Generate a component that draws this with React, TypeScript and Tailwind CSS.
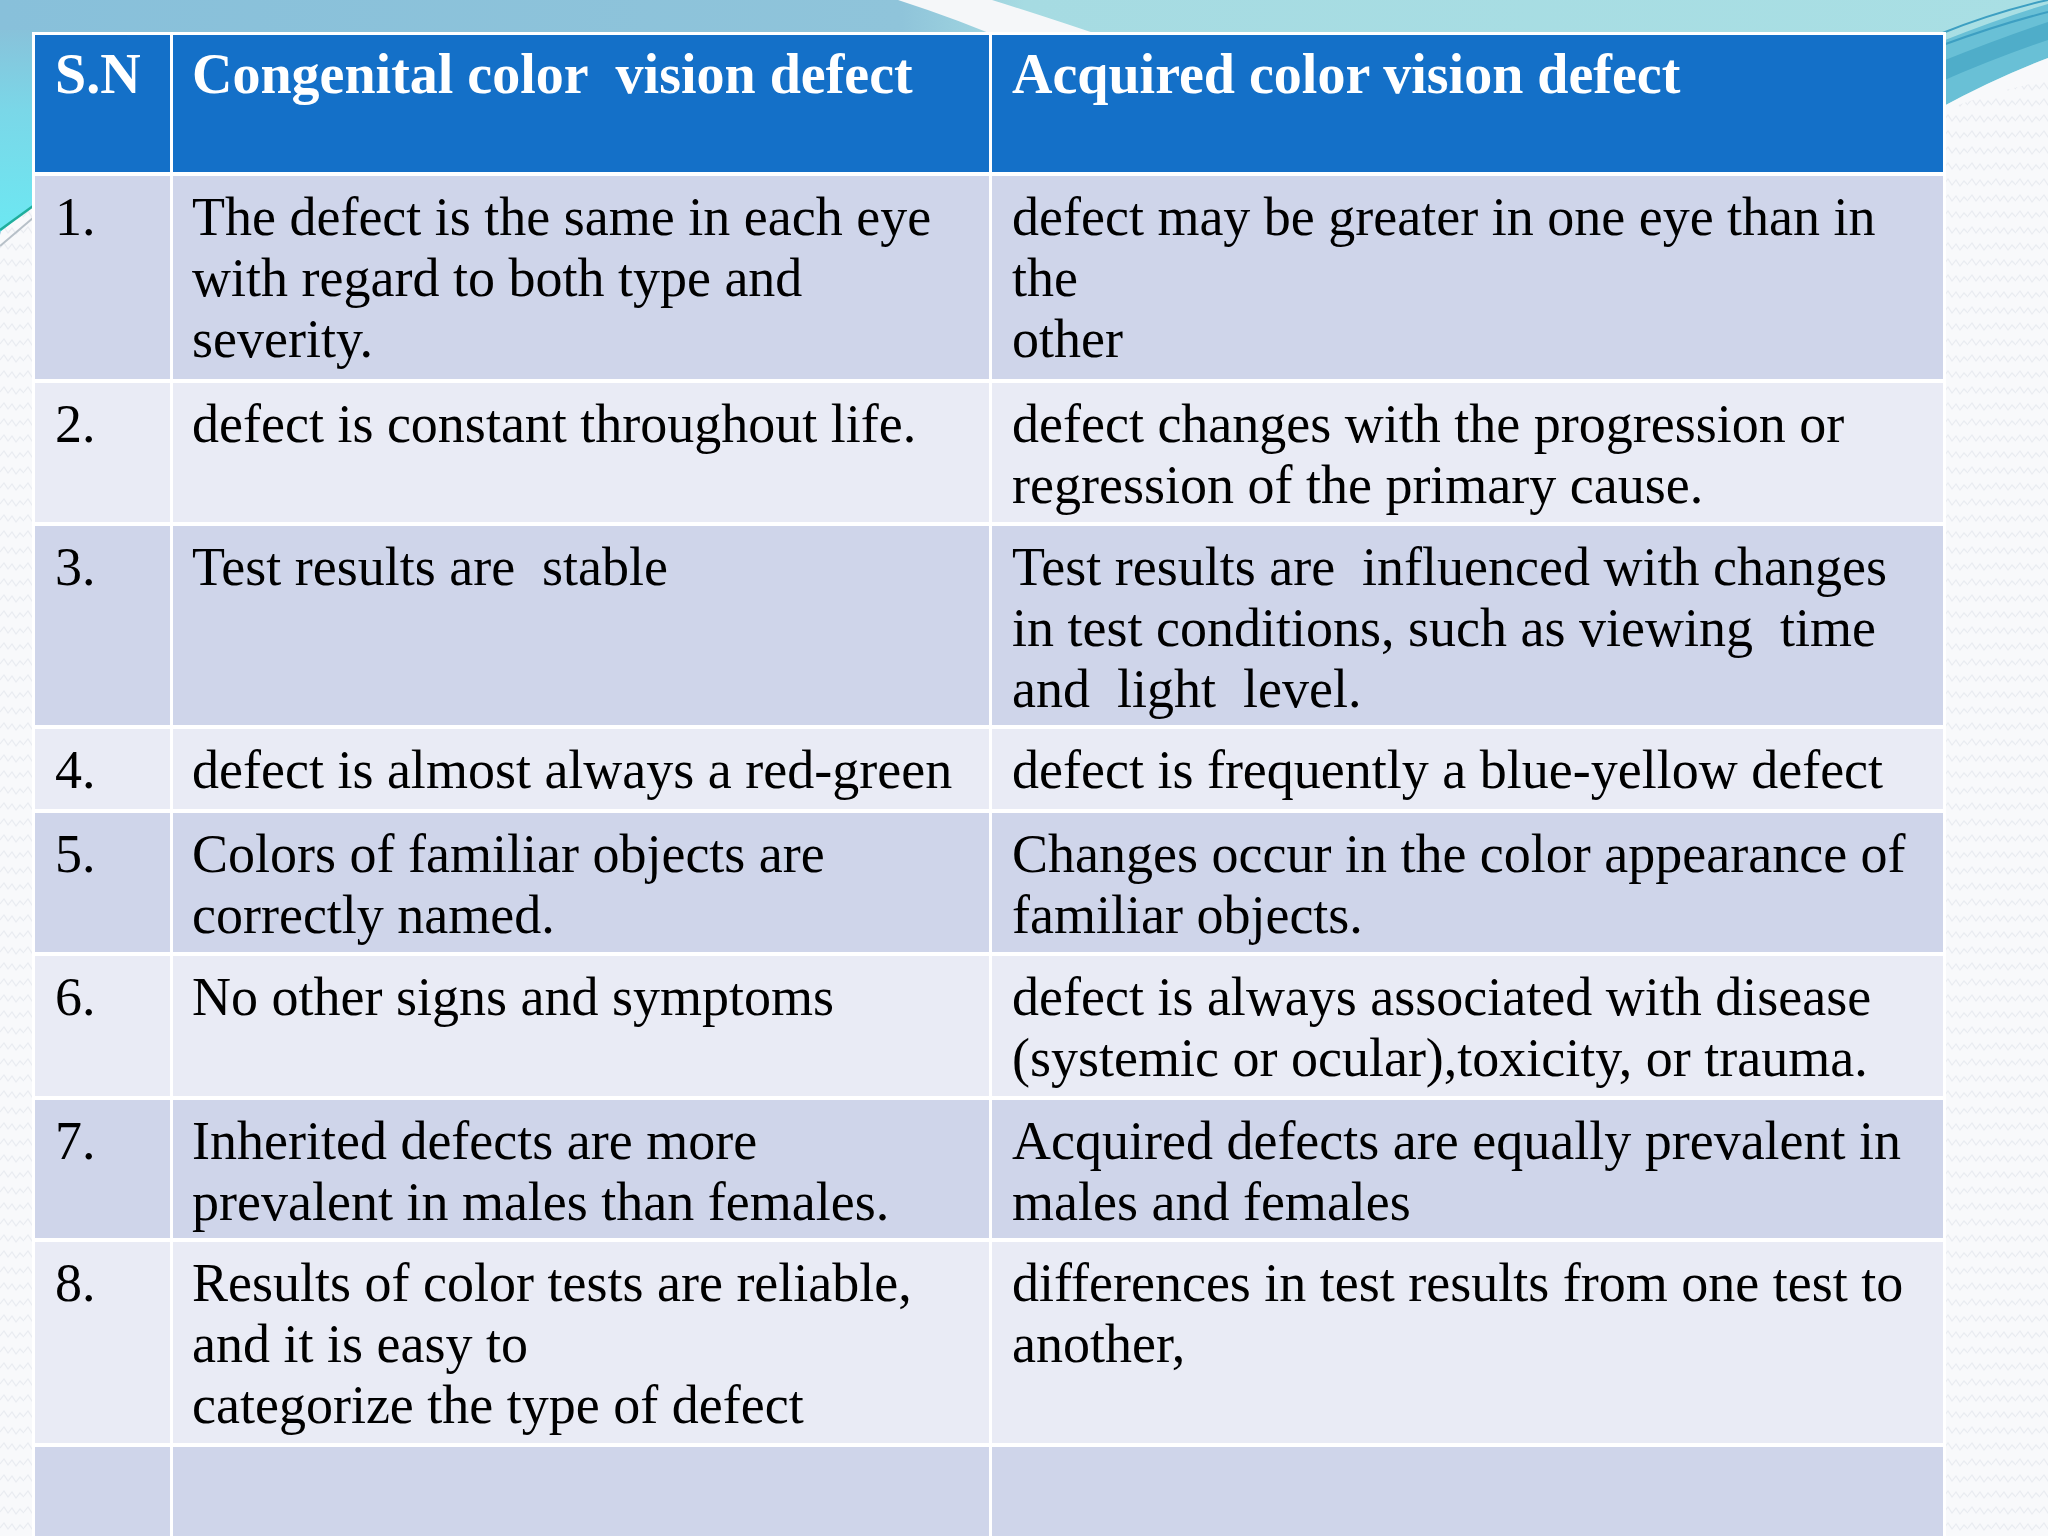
import React from "react";

type Row = { n: string; a: string[]; b: string[]; h: string; bg: string };

const rows: Row[] = [
  {
    n: "1.",
    a: ["The defect is the same in each eye", "with regard to both type and", "severity."],
    b: ["defect may be greater in one eye than in", "the", "other"],
    h: "h-[203px]",
    bg: "bg-[#cfd5ea]",
  },
  {
    n: "2.",
    a: ["defect is constant throughout life."],
    b: ["defect changes with the progression or", "regression of the primary cause."],
    h: "h-[139px]",
    bg: "bg-[#e9ebf5]",
  },
  {
    n: "3.",
    a: ["Test results are  stable"],
    b: ["Test results are  influenced with changes", "in test conditions, such as viewing  time", "and  light  level."],
    h: "h-[199px]",
    bg: "bg-[#cfd5ea]",
  },
  {
    n: "4.",
    a: ["defect is almost always a red-green"],
    b: ["defect is frequently a blue-yellow defect"],
    h: "h-[80px]",
    bg: "bg-[#e9ebf5]",
  },
  {
    n: "5.",
    a: ["Colors of familiar objects are", "correctly named."],
    b: ["Changes occur in the color appearance of", "familiar objects."],
    h: "h-[139px]",
    bg: "bg-[#cfd5ea]",
  },
  {
    n: "6.",
    a: ["No other signs and symptoms"],
    b: ["defect is always associated with disease", "(systemic or ocular),toxicity, or trauma."],
    h: "h-[140px]",
    bg: "bg-[#e9ebf5]",
  },
  {
    n: "7.",
    a: ["Inherited defects are more", "prevalent in males than females."],
    b: ["Acquired defects are equally prevalent in", "males and females"],
    h: "h-[138px]",
    bg: "bg-[#cfd5ea]",
  },
  {
    n: "8.",
    a: ["Results of color tests are reliable,", "and it is easy to", "categorize the type of defect"],
    b: ["differences in test results from one test to", "another,"],
    h: "h-[201px]",
    bg: "bg-[#e9ebf5]",
  },
  {
    n: "",
    a: [],
    b: [],
    h: "h-[140px]",
    bg: "bg-[#cfd5ea]",
  },
];

function Lines({ lines }: { lines: string[] }) {
  return (
    <div className="flex flex-col">
      {lines.map((l, i) => (
        <span key={i} className="whitespace-pre leading-[61px]">
          {l}
        </span>
      ))}
    </div>
  );
}

function Background() {
  return (
    <svg
      className="absolute inset-0 h-full w-full"
      viewBox="0 0 2048 1536"
      preserveAspectRatio="none"
    >
      <defs>
        <pattern id="tex" width="24" height="16" patternUnits="userSpaceOnUse">
          <rect width="24" height="16" fill="#f8f9fb" />
          <path d="M0 8 L4 3 L8 9 L12 4 L16 10 L20 5 L24 9" fill="none" stroke="#e9ecf1" strokeWidth="1.2" />
        </pattern>
        <linearGradient id="band" x1="0" y1="0" x2="1" y2="0">
          <stop offset="0" stopColor="#88c0da" />
          <stop offset="0.44" stopColor="#8fc4da" />
          <stop offset="0.5" stopColor="#a6dbe2" />
          <stop offset="1" stopColor="#a9dfe4" />
        </linearGradient>
        <linearGradient id="leftc" x1="0" y1="0" x2="0" y2="1">
          <stop offset="0" stopColor="#88c2da" />
          <stop offset="0.4" stopColor="#7ad7e8" />
          <stop offset="1" stopColor="#6ce8f2" />
        </linearGradient>
      </defs>
      <rect width="2048" height="1536" fill="url(#tex)" />
      <path d="M0 0 H2048 V60 Q2000 85 1940 108 L60 108 Q20 150 0 235 Z" fill="url(#band)" />
      <path d="M0 30 L40 30 L40 200 L0 232 Z" fill="url(#leftc)" />
      <path d="M0 230 L40 201" stroke="#1fae9c" strokeWidth="2.5" />
      <path d="M0 246 L40 212" stroke="#b7c0c8" strokeWidth="2" />
      <path d="M898 0 L992 0 Q1050 18 1120 42 L1010 42 Q960 20 898 0 Z" fill="#f5f7f9" />
      <path d="M1940 42 Q2000 18 2048 4 V58 Q1995 78 1940 108 Z" fill="#69c0d6" />
      <path d="M1940 62 Q2000 38 2048 22 V40 Q1995 58 1940 82 Z" fill="#4fadc9" />
      <path d="M1940 108 Q1995 78 2048 58 V80 Q1990 92 1940 112 Z" fill="#f8f9fb" />
      <path d="M1940 34 Q1995 12 2048 0" fill="none" stroke="#3d9fc2" strokeWidth="2" />
      <path d="M1940 46 Q2000 24 2048 12" fill="none" stroke="#3d9fc2" strokeWidth="2" />
    </svg>
  );
}

export default function App() {
  return (
    <div
      className="relative h-[1536px] w-[2048px] overflow-hidden"
      style={{ fontFamily: '"Liberation Serif", "Times New Roman", serif' }}
    >
      <Background />
      <div className="relative ml-[32px] mt-[32px] w-[1914px] bg-white p-[3px]">
        <div className="grid grid-cols-[135px_816px_951px] gap-x-[3px] gap-y-[4px] bg-white">
          <div className="h-[137px] bg-[#1470c8] pl-[20px] pt-[9px] text-[56px] font-bold leading-[61px] text-white">
            S.N
          </div>
          <div className="h-[137px] bg-[#1470c8] pl-[19px] pt-[9px] text-[56px] font-bold leading-[61px] text-white whitespace-pre">
            Congenital color  vision defect
          </div>
          <div className="h-[137px] bg-[#1470c8] pl-[20px] pt-[9px] text-[56px] font-bold leading-[61px] text-white">
            Acquired color vision defect
          </div>
          {rows.map((r, i) => (
            <React.Fragment key={i}>
              <div className={`${r.h} ${r.bg} pl-[20px] pt-[11px] text-[54px] leading-[61px] text-black`}>
                {r.n}
              </div>
              <div className={`${r.h} ${r.bg} pl-[19px] pt-[11px] text-[54px] text-black`}>
                <Lines lines={r.a} />
              </div>
              <div className={`${r.h} ${r.bg} pl-[20px] pt-[11px] text-[54px] text-black`}>
                <Lines lines={r.b} />
              </div>
            </React.Fragment>
          ))}
        </div>
      </div>
    </div>
  );
}
